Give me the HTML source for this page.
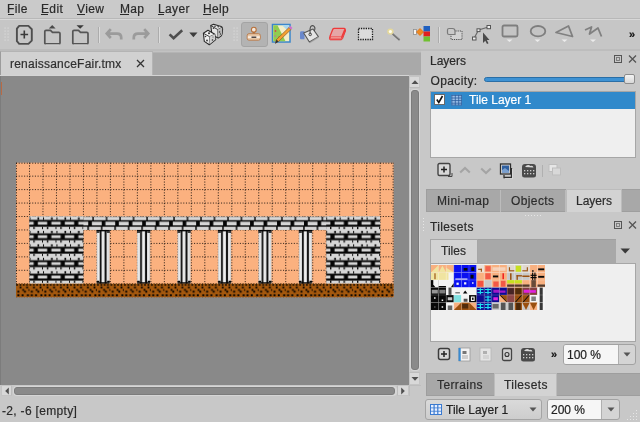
<!DOCTYPE html>
<html><head><meta charset="utf-8">
<style>
*{margin:0;padding:0;box-sizing:border-box}
html,body{width:640px;height:422px;overflow:hidden;background:#c8c8c8;font-family:"Liberation Sans",sans-serif;font-size:12px;color:#2a2a2a;position:relative}
.a{position:absolute}
.t{position:absolute;white-space:nowrap;line-height:14px;-webkit-text-stroke:0.2px currentColor;filter:grayscale(1)}
.u{position:absolute;height:1px;background:#2a2a2a}
svg.a{overflow:visible}
</style></head><body>
<!-- menu bar -->
<div class="a" style="left:0;top:0;width:640px;height:18px;background:#cacaca"></div>
<div class="t" style="left:7px;top:2px;letter-spacing:0.35px">File</div><div class="u" style="left:8px;top:14.2px;width:6px"></div>
<div class="t" style="left:41px;top:2px;letter-spacing:0.35px">Edit</div><div class="u" style="left:41px;top:14.2px;width:7px"></div>
<div class="t" style="left:77px;top:2px;letter-spacing:0.35px">View</div><div class="u" style="left:77px;top:14.2px;width:8px"></div>
<div class="t" style="left:120px;top:2px;letter-spacing:0.35px">Map</div><div class="u" style="left:120px;top:14.2px;width:9px"></div>
<div class="t" style="left:158px;top:2px;letter-spacing:0.35px">Layer</div><div class="u" style="left:158px;top:14.2px;width:6px"></div>
<div class="t" style="left:203px;top:2px;letter-spacing:0.35px">Help</div><div class="u" style="left:203px;top:14.2px;width:8px"></div>
<!-- toolbar -->
<div class="a" style="left:0;top:18px;width:640px;height:1px;background:#b8b8b8"></div>
<div class="a" style="left:0;top:19px;width:640px;height:1px;background:#d8d8d8"></div>
<div class="a" style="left:0;top:20px;width:640px;height:29px;background:#c6c6c6"></div>
<div class="a" style="left:0;top:49px;width:421px;height:2px;background:#bcbcbc"></div>
<!-- grips -->
<svg class="a" style="left:4px;top:27px" width="6" height="16"><g fill="#d9d9d9"><rect x="0.5" y="0.5" width="1.2" height="1.2"/><rect x="0.5" y="3.5" width="1.2" height="1.2"/><rect x="0.5" y="6.5" width="1.2" height="1.2"/><rect x="0.5" y="9.5" width="1.2" height="1.2"/><rect x="0.5" y="12.5" width="1.2" height="1.2"/><rect x="3.5" y="0.5" width="1.2" height="1.2"/><rect x="3.5" y="3.5" width="1.2" height="1.2"/><rect x="3.5" y="6.5" width="1.2" height="1.2"/><rect x="3.5" y="9.5" width="1.2" height="1.2"/><rect x="3.5" y="12.5" width="1.2" height="1.2"/></g></svg>
<svg class="a" style="left:233px;top:27px" width="6" height="16"><g fill="#d9d9d9"><rect x="0.5" y="0.5" width="1.2" height="1.2"/><rect x="0.5" y="3.5" width="1.2" height="1.2"/><rect x="0.5" y="6.5" width="1.2" height="1.2"/><rect x="0.5" y="9.5" width="1.2" height="1.2"/><rect x="0.5" y="12.5" width="1.2" height="1.2"/><rect x="3.5" y="0.5" width="1.2" height="1.2"/><rect x="3.5" y="3.5" width="1.2" height="1.2"/><rect x="3.5" y="6.5" width="1.2" height="1.2"/><rect x="3.5" y="9.5" width="1.2" height="1.2"/><rect x="3.5" y="12.5" width="1.2" height="1.2"/></g></svg>
<!-- new -->
<svg class="a" style="left:15px;top:24px" width="20" height="22"><path d="M4 2.6H13.6L16.6 5.6V17.2L13.6 20.4H4L1.8 17.8V5.2Z" fill="none" stroke="#e4e4e4" stroke-width="0.9"/><path d="M4.2 1.9H13.4L16.8 5.2V16.6L13.4 19.9H4.2L1.9 17.2V4.6Z" fill="none" stroke="#4e4e4e" stroke-width="1.9" stroke-linejoin="round"/><path d="M9.3 6.6V14.4M5.5 10.5H13.1" stroke="#3a3a3a" stroke-width="1.6"/></svg>
<!-- open -->
<svg class="a" style="left:43px;top:24px" width="19" height="22"><path d="M5.8 4.5L9.2 1L12.6 4.5Z" fill="#4a4a4a"/><path d="M1.8 19V7.5Q1.8 6.3 3 6.3H7.5L9.5 8.3H15.8Q17 8.3 17 9.5V19Q17 19.8 16 19.8H2.8Q1.8 19.8 1.8 19Z" fill="none" stroke="#555" stroke-width="1.7" stroke-linejoin="round"/><path d="M2.5 20.8H16.5" stroke="#e0e0e0" stroke-width="0.8"/></svg>
<!-- save -->
<svg class="a" style="left:71px;top:24px" width="19" height="22"><path d="M5.5 1.2H12.8L9.15 4.8Z" fill="#3a3a3a"/><path d="M1.8 19V7.5Q1.8 6.3 3 6.3H7.5L9.5 8.3H15.8Q17 8.3 17 9.5V19Q17 19.8 16 19.8H2.8Q1.8 19.8 1.8 19Z" fill="none" stroke="#555" stroke-width="1.7" stroke-linejoin="round"/><path d="M2.5 20.8H16.5" stroke="#e0e0e0" stroke-width="0.8"/></svg>
<!-- separators -->
<div class="a" style="left:98px;top:27px;width:1px;height:16px;background:#acacac"></div><div class="a" style="left:99px;top:27px;width:1px;height:16px;background:#dcdcdc"></div>
<div class="a" style="left:158px;top:27px;width:1px;height:16px;background:#acacac"></div><div class="a" style="left:159px;top:27px;width:1px;height:16px;background:#dcdcdc"></div>
<div class="a" style="left:438px;top:27px;width:1px;height:16px;background:#acacac"></div><div class="a" style="left:439px;top:27px;width:1px;height:16px;background:#dcdcdc"></div>
<!-- undo / redo -->
<svg class="a" style="left:104px;top:27px" width="20" height="15"><path d="M6.8 2.2L2.8 6.6L6.8 11M3.2 6.6H13Q17.2 6.6 17.2 10.6V12.4" fill="none" stroke="#9b9b9b" stroke-width="2.7"/></svg>
<svg class="a" style="left:131px;top:27px" width="20" height="15"><path d="M13.2 2.2L17.2 6.6L13.2 11M16.8 6.6H7Q2.8 6.6 2.8 10.6V12.4" fill="none" stroke="#9b9b9b" stroke-width="2.7"/></svg>
<!-- check + drop -->
<svg class="a" style="left:168px;top:28px" width="16" height="13"><path d="M1.6 6.4L5.6 10.3L14.2 2.2" fill="none" stroke="#4e4e4e" stroke-width="2.6"/></svg>
<svg class="a" style="left:189px;top:32px" width="9" height="6"><path d="M0.3 0.6H8.5L4.4 5.2Z" fill="#3c3c3c"/></svg>
<!-- dice -->
<svg class="a" style="left:200px;top:21px" width="28" height="26">
<path d="M10.8 4.6L13.6 3.2L21.2 5.6Q22.6 6.4 22.6 8L22.2 12.5Q22 14 21 15L18.2 17L12 14Z" fill="#e4e4e4" stroke="#2a2a2a" stroke-width="1.1" stroke-linejoin="round"/>
<path d="M10.8 4.6L17.8 8.6L22.2 6.2M17.8 8.6L18 16.5" fill="none" stroke="#2a2a2a" stroke-width="0.9"/>
<path d="M17.8 8.6L22.2 6.5L22 13Q21.6 14.8 18 16.5Z" fill="#b8b8b8"/>
<circle cx="15" cy="5.2" r="0.8" fill="#333"/><circle cx="18.2" cy="5.8" r="0.8" fill="#333"/><circle cx="13.5" cy="7.2" r="0.8" fill="#333"/><circle cx="19.5" cy="11" r="0.8" fill="#333"/><circle cx="20.5" cy="13" r="0.7" fill="#333"/>
<path d="M3.4 12.3L8 9.3L14.8 13.3L15.7 18.5L9.3 23.8L4.3 20.4Z" fill="#f0f0f0" stroke="#2a2a2a" stroke-width="1.1" stroke-linejoin="round"/>
<path d="M3.4 12.3L9.6 15.7L14.8 13.3M9.6 15.7L9.3 23.8" fill="none" stroke="#2a2a2a" stroke-width="0.9"/>
<path d="M9.6 15.7L14.8 13.3L15.4 18.4L9.4 23.2Z" fill="#cfcfcf"/>
<circle cx="9" cy="12.3" r="1" fill="#333"/><circle cx="5.5" cy="15.5" r="0.8" fill="#333"/><circle cx="7" cy="19.5" r="0.9" fill="#333"/><circle cx="12.5" cy="19" r="0.8" fill="#333"/><circle cx="13" cy="16" r="0.6" fill="#555"/>
</svg>
<!-- stamp (active) -->
<div class="a" style="left:241px;top:22px;width:27px;height:25px;background:#b3b3b3;border:1px solid #a4a4a4;border-radius:3px"></div>
<svg class="a" style="left:246px;top:25px" width="17" height="18">
<rect x="6.7" y="6.5" width="2.2" height="2.8" fill="#b07040"/>
<circle cx="7.8" cy="4.7" r="2.4" fill="#f4e8dc" stroke="#b8703a" stroke-width="1.1"/>
<path d="M1.2 10.5Q1.2 8.7 3 8.7H12.5Q14.3 8.7 14.3 10.5V13.5Q14.3 15.2 12.5 15.2H3Q1.2 15.2 1.2 13.5Z" fill="#e8c8a8" stroke="#b87848" stroke-width="0.9"/>
<rect x="1.8" y="11.2" width="12" height="1.8" fill="#f8ece0"/>
<rect x="5.5" y="11.6" width="4.8" height="1.2" fill="#2a2020"/>
</svg>
<!-- terrain -->
<svg class="a" style="left:271px;top:23px" width="22" height="23">
<rect x="1.5" y="1.5" width="17.5" height="17.5" fill="#f4eec8" stroke="#3a86cc" stroke-width="1.5"/>
<path d="M2.3 2.3H6.5L14.5 18.2H2.3Z" fill="#90cc50"/>
<path d="M11 2.3H18.2V9Z" fill="#a8d8f0"/>
<circle cx="4.5" cy="8" r="0.9" fill="#d84848"/><circle cx="4.2" cy="13" r="0.8" fill="#c060c0"/><circle cx="8" cy="14" r="0.7" fill="#d84848"/>
<path d="M4.5 19.5L5.5 16.5L18 4.5L20 6.5L7.5 18.5Z" fill="#f4a030" stroke="#8a5a2a" stroke-width="0.7"/>
<path d="M18 4.5L19.5 3L21.5 5L20 6.5Z" fill="#d070d0"/>
<path d="M4 21L5.5 16.5L7.5 18.5Z" fill="#333"/>
</svg>
<!-- bucket -->
<svg class="a" style="left:299px;top:24px" width="22" height="20">
<path d="M1 8.5Q1 7.3 2.5 7.3H5.5V15.2H2Q1 15.2 1 14.2Z" fill="#6a88cc"/>
<path d="M4.7 9L14 5L19.4 12.6L10.4 18Z" fill="#e4e4e4" stroke="#555" stroke-width="1.1" stroke-linejoin="round"/>
<path d="M10.4 18L19.4 12.6L19.8 13.8L11 19.2Z" fill="#9a9a9a" opacity="0.7"/>
<path d="M11.2 10.2Q10.5 3 12.3 2Q14.5 0.8 15.8 3.5Q16.3 5 15.2 7" fill="none" stroke="#4a4a4a" stroke-width="1.1"/>
<circle cx="11.2" cy="10.4" r="1.3" fill="none" stroke="#4a4a4a" stroke-width="1"/>
</svg>
<!-- eraser -->
<svg class="a" style="left:328px;top:27px" width="19" height="15">
<path d="M1.5 10.2V11.8Q1.5 12.8 2.5 12.8H13Q14 12.8 14.5 11.8L17.5 4V2.5L13.5 10.2Z" fill="#e85a5a" stroke="#ee3a3a" stroke-width="1" stroke-linejoin="round"/>
<path d="M4.8 2.2Q5.3 1.4 6.2 1.4H16.2Q17.3 1.4 16.8 2.5L14 9.3Q13.6 10.2 12.6 10.2H2.6Q1.5 10.2 2 9.2Z" fill="#e6a6a6" stroke="#ee3a3a" stroke-width="1.3" stroke-linejoin="round"/>
<path d="M2.8 10.8H13" stroke="#f4d0c8" stroke-width="0.8"/>
</svg>
<!-- rect select -->
<svg class="a" style="left:357px;top:27px" width="18" height="14"><rect x="1.5" y="1.5" width="14" height="11" fill="#dcdcdc" stroke="#1a1a1a" stroke-width="1.3" stroke-dasharray="1.3 1.1"/></svg>
<!-- magic wand -->
<svg class="a" style="left:386px;top:27px" width="16" height="15">
<circle cx="4.4" cy="4.6" r="3.2" fill="#ffe878" opacity="0.55"/><circle cx="4.4" cy="4.6" r="1.6" fill="#fffff0"/>
<path d="M6.6 6.8L13.6 13" stroke="#6e6e6e" stroke-width="1.7"/><path d="M7 6.5L13.8 12.5" stroke="#a8a8a8" stroke-width="0.5"/>
</svg>
<!-- select same tile -->
<svg class="a" style="left:412px;top:25px" width="20" height="18">
<rect x="1.5" y="4.5" width="3" height="5" fill="#f4f4f4" stroke="#909090" stroke-width="0.8"/>
<path d="M4.5 7L8 3.5L11.5 7L8 10.5Z" fill="#f08a20" stroke="#e07010" stroke-width="0.8"/>
<rect x="11.5" y="1" width="6.5" height="5.5" fill="#2060c0"/><rect x="11.5" y="6.5" width="6.5" height="5" fill="#e02020"/><rect x="11.5" y="11.5" width="6.5" height="5" fill="#70c030"/>
</svg>
<!-- select objects -->
<svg class="a" style="left:446px;top:27px" width="18" height="14"><rect x="5" y="4" width="11" height="8.5" fill="#d2d2d2" stroke="#505050" stroke-width="1" stroke-dasharray="1.2 1"/><path d="M3 1.5H6.5Q9 1.5 9 4V7.5H3Q1.5 7.5 1.5 6V3Q1.5 1.5 3 1.5Z" fill="#cacaca" stroke="#7a7a7a" stroke-width="1.2"/></svg>
<!-- edit polygons -->
<svg class="a" style="left:471px;top:24px" width="21" height="21">
<path d="M3 14.5L7.5 6L17.5 3" fill="none" stroke="#6a6a6a" stroke-width="1.2"/>
<rect x="1.5" y="13" width="3.5" height="3" fill="#eee" stroke="#555" stroke-width="1"/>
<rect x="6" y="4.8" width="3" height="2.8" fill="#eee" stroke="#555" stroke-width="1"/>
<rect x="16" y="1.5" width="3.5" height="3.2" fill="#eee" stroke="#555" stroke-width="1"/>
<path d="M12 8.5V19L14.3 16.8L16 20L17.5 19.2L15.8 16H18.5Z" fill="#4a4a4a"/>
</svg>
<!-- rect / ellipse / polygon / polyline -->
<svg class="a" style="left:501px;top:24px" width="18" height="20"><rect x="1.5" y="1.5" width="15" height="11" fill="#c4c4c4" stroke="#7e7e7e" stroke-width="1.8" rx="1.5"/><path d="M5.5 15.5H11.5L8.5 18Z" fill="#ececec"/></svg>
<svg class="a" style="left:529px;top:24px" width="18" height="20"><ellipse cx="9" cy="7.2" rx="7.3" ry="5.2" fill="#c4c4c4" stroke="#7e7e7e" stroke-width="1.8"/><path d="M5.5 15.5H11.5L8.5 18Z" fill="#ececec"/></svg>
<svg class="a" style="left:554px;top:24px" width="21" height="20"><path d="M2 8.5L14.5 2L18.5 12.5Z" fill="none" stroke="#808080" stroke-width="1.8" stroke-linejoin="round"/><path d="M7.5 15.5H13.5L10.5 18Z" fill="#ececec"/></svg>
<svg class="a" style="left:583px;top:24px" width="21" height="20"><path d="M2 6L8.5 3L6.5 10L15 4L18.5 12.5" fill="none" stroke="#808080" stroke-width="1.8" stroke-linejoin="round"/><path d="M7 15.5H13L10 18Z" fill="#ececec"/></svg>
<!-- chevron » -->
<div class="t" style="left:629px;top:27px;font-size:11px;font-weight:bold;color:#111;letter-spacing:-1px">»</div>
<!-- tab bar -->
<div class="a" style="left:0;top:51px;width:421px;height:25px;background:#c2c2c2"></div>
<div class="a" style="left:152px;top:52px;width:269px;height:23px;background:#a9a9a9;border-top:1px solid #b4b4b4"></div>
<div class="a" style="left:0;top:51px;width:153px;height:24px;background:#d1d1d1;border:1px solid #b4b4b4;border-left-color:#9c9c9c;border-bottom:none"></div>
<div class="t" style="left:10px;top:57px;color:#303030;letter-spacing:0.22px">renaissanceFair.tmx</div>
<svg class="a" style="left:136px;top:59px" width="9" height="9"><path d="M1 1L8 8M8 1L1 8" stroke="#333" stroke-width="1.3"/></svg>
<!-- map view -->
<div class="a" style="left:0;top:75px;width:409px;height:1px;background:#d4d4d4"></div>
<div class="a" style="left:0;top:76px;width:409px;height:309px;background:#898989"></div>
<div class="a" style="left:0;top:76px;width:1px;height:309px;background:#7c7c7c"></div>
<div class="a" style="left:1px;top:82px;width:1.3px;height:13px;background:#b86a45"></div>
<svg class="a" style="left:16px;top:162px" width="379" height="137" viewBox="0 0 379 137">
<defs>
<pattern id="brk" x="0" y="0" width="13.5" height="13.5" patternUnits="userSpaceOnUse">
<rect width="13.5" height="13.5" fill="#050505"/>
<rect x="0" y="0" width="13.5" height="3.4" fill="#d6d6d6"/>
<rect x="0" y="10.3" width="13.5" height="3.2" fill="#d6d6d6"/>
<rect x="3.9" y="10.3" width="1.3" height="2.4" fill="#050505"/>
<rect x="12.6" y="10.3" width="1.3" height="2.4" fill="#050505"/>
<rect x="8.1" y="0.9" width="1.6" height="2.5" fill="#050505"/>
<rect x="-0.4" y="0.9" width="1.4" height="2.5" fill="#050505"/>
<rect x="0" y="5.3" width="4.2" height="2.9" fill="#d6d6d6"/>
<rect x="8.4" y="5.3" width="5.1" height="2.9" fill="#d6d6d6"/>
</pattern>
<pattern id="lint" x="0" y="0" width="13.5" height="13.5" patternUnits="userSpaceOnUse">
<rect width="13.5" height="13.5" fill="#050505"/>
<rect x="0" y="0.2" width="9" height="3.5" fill="#d6d6d6"/>
<rect x="10.4" y="0.2" width="3.1" height="3.5" fill="#d6d6d6"/>
<rect x="0" y="5.2" width="4.8" height="3.7" fill="#d6d6d6"/>
<rect x="8.5" y="5.2" width="5" height="3.7" fill="#d6d6d6"/>
<rect x="0" y="10.3" width="4" height="3.2" fill="#d6d6d6"/>
<rect x="5.5" y="10.3" width="8" height="3.2" fill="#d6d6d6"/>
</pattern>
<pattern id="dirt" x="0" y="0" width="13.5" height="13.5" patternUnits="userSpaceOnUse">
<rect width="13.5" height="13.5" fill="#a4580e"/>
<g fill="#000">
<rect x="0.2" y="0.3" width="1.6" height="1.6"/><rect x="3.6" y="0.3" width="1.6" height="1.6"/><rect x="6.9" y="0.3" width="1.6" height="1.6"/><rect x="10.2" y="0.3" width="1.6" height="1.6"/>
<rect x="3.6" y="2.8" width="1.8" height="1.8"/><rect x="10.2" y="2.8" width="1.8" height="1.8"/>
<rect x="6.3" y="5.3" width="1.8" height="1.8"/><rect x="12.4" y="5.5" width="1.5" height="1.6"/>
<rect x="1.4" y="7" width="1.9" height="1.9"/><rect x="8" y="7" width="1.9" height="1.9"/>
<rect x="1.4" y="10.6" width="1.9" height="1.9"/><rect x="5.6" y="10.6" width="1.9" height="1.9"/><rect x="11" y="10.6" width="1.9" height="1.9"/>
</g>
</pattern>
<pattern id="pil" x="0" y="0" width="13.5" height="13.5" patternUnits="userSpaceOnUse">
<rect x="-0.5" width="13.6" height="13.5" fill="#d2d4d6"/>
<rect x="0.8" width="1.2" height="13.5" fill="#eeeeee"/>
<rect x="2.9" width="1.6" height="13.5" fill="#050505"/>
<rect x="5.2" width="1.6" height="13.5" fill="#f0f0f0"/>
<rect x="7.8" width="1.8" height="13.5" fill="#050505"/>
<rect x="10.3" width="1.2" height="13.5" fill="#ececec"/>
</pattern>
</defs>
<g transform="translate(0,0.7) scale(0.99896,0.9963)">
<rect width="378" height="135" fill="#fbb17f"/>
<path d="M0.5 0V135 M13.5 0V135 M27.0 0V135 M40.5 0V135 M54.0 0V135 M67.5 0V135 M81.0 0V135 M94.5 0V135 M108.0 0V135 M121.5 0V135 M135.0 0V135 M148.5 0V135 M162.0 0V135 M175.5 0V135 M189.0 0V135 M202.5 0V135 M216.0 0V135 M229.5 0V135 M243.0 0V135 M256.5 0V135 M270.0 0V135 M283.5 0V135 M297.0 0V135 M310.5 0V135 M324.0 0V135 M337.5 0V135 M351.0 0V135 M364.5 0V135 M377.5 0V135 M0 0.5H378 M0 13.5H378 M0 27.0H378 M0 40.5H378 M0 54.0H378 M0 67.5H378 M0 81.0H378 M0 94.5H378 M0 108.0H378 M0 121.5H378 M0 134.5H378" stroke="#000" stroke-width="1" stroke-dasharray="1.1 1.6" opacity="0.78" fill="none"/>
<rect x="13.5" y="54.0" width="351.0" height="13.5" fill="url(#lint)"/>
<rect x="13.5" y="54.0" width="54.0" height="67.5" fill="url(#brk)"/>
<rect x="310.5" y="54.0" width="54.0" height="67.5" fill="url(#brk)"/>
<rect x="80.6" y="67.5" width="13.3" height="54.0" fill="url(#pil)"/>
<rect x="80.6" y="67.5" width="13.3" height="1.4" fill="#050505"/>
<rect x="80.6" y="68.9" width="3" height="1.4" fill="#050505"/>
<rect x="90.9" y="68.9" width="3" height="1.4" fill="#050505"/>
<rect x="80.8" y="118.5" width="2.6" height="1.6" fill="#050505"/>
<rect x="91.3" y="118.5" width="2.6" height="1.6" fill="#050505"/>
<rect x="80.8" y="120.0" width="12.8" height="1.5" fill="#050505"/>
<rect x="121.1" y="67.5" width="13.3" height="54.0" fill="url(#pil)"/>
<rect x="121.1" y="67.5" width="13.3" height="1.4" fill="#050505"/>
<rect x="121.1" y="68.9" width="3" height="1.4" fill="#050505"/>
<rect x="131.4" y="68.9" width="3" height="1.4" fill="#050505"/>
<rect x="121.3" y="118.5" width="2.6" height="1.6" fill="#050505"/>
<rect x="131.8" y="118.5" width="2.6" height="1.6" fill="#050505"/>
<rect x="121.3" y="120.0" width="12.8" height="1.5" fill="#050505"/>
<rect x="161.6" y="67.5" width="13.3" height="54.0" fill="url(#pil)"/>
<rect x="161.6" y="67.5" width="13.3" height="1.4" fill="#050505"/>
<rect x="161.6" y="68.9" width="3" height="1.4" fill="#050505"/>
<rect x="171.9" y="68.9" width="3" height="1.4" fill="#050505"/>
<rect x="161.8" y="118.5" width="2.6" height="1.6" fill="#050505"/>
<rect x="172.3" y="118.5" width="2.6" height="1.6" fill="#050505"/>
<rect x="161.8" y="120.0" width="12.8" height="1.5" fill="#050505"/>
<rect x="202.1" y="67.5" width="13.3" height="54.0" fill="url(#pil)"/>
<rect x="202.1" y="67.5" width="13.3" height="1.4" fill="#050505"/>
<rect x="202.1" y="68.9" width="3" height="1.4" fill="#050505"/>
<rect x="212.4" y="68.9" width="3" height="1.4" fill="#050505"/>
<rect x="202.3" y="118.5" width="2.6" height="1.6" fill="#050505"/>
<rect x="212.8" y="118.5" width="2.6" height="1.6" fill="#050505"/>
<rect x="202.3" y="120.0" width="12.8" height="1.5" fill="#050505"/>
<rect x="242.6" y="67.5" width="13.3" height="54.0" fill="url(#pil)"/>
<rect x="242.6" y="67.5" width="13.3" height="1.4" fill="#050505"/>
<rect x="242.6" y="68.9" width="3" height="1.4" fill="#050505"/>
<rect x="252.9" y="68.9" width="3" height="1.4" fill="#050505"/>
<rect x="242.8" y="118.5" width="2.6" height="1.6" fill="#050505"/>
<rect x="253.3" y="118.5" width="2.6" height="1.6" fill="#050505"/>
<rect x="242.8" y="120.0" width="12.8" height="1.5" fill="#050505"/>
<rect x="283.1" y="67.5" width="13.3" height="54.0" fill="url(#pil)"/>
<rect x="283.1" y="67.5" width="13.3" height="1.4" fill="#050505"/>
<rect x="283.1" y="68.9" width="3" height="1.4" fill="#050505"/>
<rect x="293.4" y="68.9" width="3" height="1.4" fill="#050505"/>
<rect x="283.3" y="118.5" width="2.6" height="1.6" fill="#050505"/>
<rect x="293.8" y="118.5" width="2.6" height="1.6" fill="#050505"/>
<rect x="283.3" y="120.0" width="12.8" height="1.5" fill="#050505"/>
<rect x="0" y="121.5" width="378" height="13.5" fill="url(#dirt)"/>
</g></svg>
<!-- v scrollbar -->
<div class="a" style="left:409px;top:76px;width:12px;height:309px;background:#c8c8c8"></div>
<div class="a" style="left:409px;top:76px;width:11px;height:12px;background:#d8d8d8;border:1px solid #c4c4c4;border-bottom-color:#bdbdbd"></div>
<svg class="a" style="left:411px;top:79px" width="8" height="6"><path d="M0.5 5H7.5L4 1.2Z" fill="#505050"/></svg>
<div class="a" style="left:410px;top:89px;width:10px;height:282px;border-radius:4px;background:#d6d6d6"></div>
<div class="a" style="left:411px;top:90px;width:8px;height:280px;border-radius:3px;background:#8a8a8a;border:1px solid #7c7c7c"></div>
<div class="a" style="left:409px;top:372px;width:11px;height:13px;background:#d8d8d8;border:1px solid #c4c4c4;border-top-color:#bdbdbd"></div>
<svg class="a" style="left:411px;top:376px" width="8" height="6"><path d="M0.5 1H7.5L4 4.8Z" fill="#505050"/></svg>
<!-- h scrollbar -->
<div class="a" style="left:0;top:385px;width:409px;height:11px;background:#c8c8c8"></div>
<div class="a" style="left:1px;top:385px;width:11px;height:11px;background:#d8d8d8;border:1px solid #c4c4c4;border-right-color:#bdbdbd"></div>
<svg class="a" style="left:4px;top:387px" width="6" height="8"><path d="M4.8 0.5V7.5L1.2 4Z" fill="#505050"/></svg>
<div class="a" style="left:13px;top:386px;width:384px;height:10px;border-radius:4px;background:#d6d6d6"></div>
<div class="a" style="left:14px;top:387px;width:381px;height:8px;border-radius:3px;background:#8a8a8a;border:1px solid #7c7c7c"></div>
<div class="a" style="left:397px;top:385px;width:12px;height:11px;background:#d8d8d8;border:1px solid #c4c4c4;border-left-color:#bdbdbd"></div>
<svg class="a" style="left:400px;top:387px" width="6" height="8"><path d="M1.2 0.5V7.5L4.8 4Z" fill="#505050"/></svg>
<div class="a" style="left:409px;top:385px;width:12px;height:11px;background:#c8c8c8;border-top:1px solid #bdbdbd;border-left:1px solid #bdbdbd"></div>
<!-- status -->
<div class="a" style="left:0;top:396px;width:421px;height:26px;background:#c8c8c8"></div>
<div class="t" style="left:2px;top:403.5px;letter-spacing:0.32px;color:#2a2a2a">-2, -6 [empty]</div>
<!-- right dock -->
<div class="a" style="left:421px;top:49px;width:219px;height:373px;background:#c8c8c8"></div>
<div class="a" style="left:421px;top:49px;width:219px;height:2px;background:#bdbdbd"></div>
<div class="t" style="left:430px;top:54px">Layers</div>
<svg class="a" style="left:613px;top:54px" width="25" height="10"><rect x="1.5" y="1.5" width="7" height="7" fill="none" stroke="#555" stroke-width="1"/><rect x="3.5" y="3.5" width="3" height="3" fill="none" stroke="#777" stroke-width="0.9"/><path d="M16 1.5L23 8.5M23 1.5L16 8.5" stroke="#555" stroke-width="1.3"/></svg>
<div class="t" style="left:430.5px;top:74px;letter-spacing:0.38px">Opacity:</div>
<div class="a" style="left:484px;top:77px;width:147px;height:5px;background:#3d92d4;border:1px solid #2a6ea6;border-radius:2.5px"></div>
<div class="a" style="left:624px;top:74px;width:11px;height:10px;background:linear-gradient(#f4f4f4,#d8d8d8);border:1px solid #8c8c8c;border-radius:2px"></div>
<!-- layer list -->
<div class="a" style="left:430px;top:91px;width:206px;height:67px;background:#efefef;border:1px solid #a6a6a6"></div>
<div class="a" style="left:431px;top:92px;width:204px;height:17px;background:#3089cb"></div>
<svg class="a" style="left:433px;top:93px" width="32" height="14">
<rect x="1.5" y="1.5" width="10" height="10" fill="#fff" stroke="#6a6a6a" stroke-width="1"/>
<path d="M3.8 6.5L5.8 9.5L9.5 3" fill="none" stroke="#111" stroke-width="1.6"/>
<rect x="18.4" y="1.9" width="10.4" height="10.4" fill="#9cc0e8"/><path d="M18.9 1.9V12.3M22.3 1.9V12.3M25.7 1.9V12.3M28.4 1.9V12.3M18.4 2.4H28.8M18.4 5H28.8M18.4 7.6H28.8M18.4 10.2H28.8M18.4 12H28.8" stroke="#2a5a9a" stroke-width="0.8"/></svg>
<div class="t" style="left:469px;top:93px;color:#fff">Tile Layer 1</div>
<!-- layer tools -->
<svg class="a" style="left:436px;top:162px" width="130" height="18">
<rect x="2" y="1.5" width="12" height="12" rx="1.5" fill="#d8d8d8" stroke="#444" stroke-width="1.4"/><path d="M8 4.5V10.5M5 7.5H11" stroke="#222" stroke-width="1.5"/><path d="M12 14.5H16V11" fill="none" stroke="#444" stroke-width="1"/>
<path d="M24.2 10.5L29 6L33.8 10.5" fill="none" stroke="#a4a4a4" stroke-width="2.1"/>
<path d="M45.2 6.5L50 11L54.8 6.5" fill="none" stroke="#a4a4a4" stroke-width="2.1"/>
<rect x="64.5" y="2" width="10" height="10" fill="#e0e0e0" stroke="#2e2e2e" stroke-width="1.3"/><rect x="66" y="3.5" width="7" height="7" fill="#2f5f9f"/><path d="M66 8L69 6L73 9V10.5H66Z" fill="#7aa0d0"/><path d="M75.5 6V15.5H68V13" fill="none" stroke="#2e2e2e" stroke-width="1.3"/><path d="M76.5 7V16.5H69" fill="none" stroke="#f0f0f0" stroke-width="0.6"/>
<path d="M86 5Q86 2 89 2H97Q100 2 100 5V13Q100 15.5 97.5 15.5H88.5Q86 15.5 86 13Z" fill="#4a4a4a"/><path d="M89 5Q91.5 1.5 94.5 4Q97 3 97.5 5.5Z" fill="#d8d8d8"/><g fill="#cfcfcf"><rect x="88" y="8" width="1.3" height="1.3"/><rect x="91" y="8" width="1.3" height="1.3"/><rect x="94" y="8" width="1.3" height="1.3"/><rect x="97" y="8" width="1.3" height="1.3"/><rect x="88" y="11" width="1.3" height="1.3"/><rect x="91" y="11" width="1.3" height="1.3"/><rect x="94" y="11" width="1.3" height="1.3"/><rect x="97" y="11" width="1.3" height="1.3"/></g>
<rect x="106" y="3" width="1" height="12" fill="#b0b0b0"/>
<rect x="113" y="2.5" width="8" height="7" fill="#e6e6e6" stroke="#bdbdbd" stroke-width="1"/><rect x="116.5" y="6" width="8" height="7" fill="#d8d8d8" stroke="#bdbdbd" stroke-width="1"/>
</svg>
<!-- layers tabs -->
<div class="a" style="left:426px;top:189px;width:214px;height:23px;background:#a8a8a8;border:1px solid #9e9e9e;border-right:none"></div>
<div class="a" style="left:500px;top:190px;width:1px;height:22px;background:#bcbcbc"></div>
<div class="a" style="left:565px;top:190px;width:1px;height:22px;background:#bcbcbc"></div>
<div class="a" style="left:566px;top:189px;width:56px;height:23px;background:#d3d3d3;border:1px solid #bcbcbc;border-bottom:none"></div>
<div class="t" style="left:437px;top:194px;color:#2c2c2c;letter-spacing:0.36px">Mini-map</div>
<div class="t" style="left:511px;top:194px;color:#2c2c2c;letter-spacing:0.4px">Objects</div>
<div class="t" style="left:576px;top:194px;color:#2c2c2c">Layers</div>
<svg class="a" style="left:524px;top:214px" width="20" height="3"><g fill="#e6e6e6"><rect x="1" y="1" width="1" height="1"/><rect x="4" y="1" width="1" height="1"/><rect x="7" y="1" width="1" height="1"/><rect x="10" y="1" width="1" height="1"/><rect x="13" y="1" width="1" height="1"/><rect x="16" y="1" width="1" height="1"/></g></svg>
<svg class="a" style="left:422px;top:217px" width="3" height="16"><g fill="#e6e6e6"><rect x="1" y="1" width="1" height="1"/><rect x="1" y="4" width="1" height="1"/><rect x="1" y="7" width="1" height="1"/><rect x="1" y="10" width="1" height="1"/><rect x="1" y="13" width="1" height="1"/></g></svg>
<!-- tilesets -->
<div class="t" style="left:430px;top:220px;letter-spacing:0.36px">Tilesets</div>
<svg class="a" style="left:613px;top:220px" width="25" height="11"><rect x="1.5" y="1.5" width="7" height="7" fill="none" stroke="#555" stroke-width="1"/><rect x="3.5" y="3.5" width="3" height="3" fill="none" stroke="#777" stroke-width="0.9"/><path d="M16 1.5L23 8.5M23 1.5L16 8.5" stroke="#555" stroke-width="1.3"/></svg>
<div class="a" style="left:430px;top:239px;width:186px;height:24px;background:#a8a8a8;border-top:1px solid #a0a0a0"></div>
<div class="a" style="left:430px;top:239px;width:48px;height:24px;background:#d3d3d3;border:1px solid #a6a6a6;border-bottom:none"></div>
<div class="t" style="left:441px;top:244px;color:#2c2c2c">Tiles</div>
<svg class="a" style="left:620px;top:248px" width="11" height="7"><path d="M0.5 0.5H10L5.25 5.5Z" fill="#3a3a3a"/></svg>
<div class="a" style="left:430px;top:263px;width:206px;height:79px;background:#efefef;border:1px solid #a6a6a6"></div>
<svg class="a" style="left:431px;top:264.5px" width="114" height="45" viewBox="0 0 113.25 44.7">
<rect x="0.00" y="0.00" width="7.55" height="7.45" fill="#f8b080"/>
<polygon points="0.00,7.45 7.55,0.00 7.55,7.45" fill="#f0e4a0"/>
<rect x="7.55" y="0.00" width="7.55" height="7.45" fill="#f8b080"/>
<polygon points="7.55,7.45 11.32,0.75 15.10,7.45" fill="#f0e4a0"/>
<rect x="15.10" y="0.00" width="7.55" height="7.45" fill="#f8b080"/>
<polygon points="15.10,2.61 22.65,7.45 15.10,7.45" fill="#f0e4a0"/>
<rect x="22.65" y="0.00" width="7.55" height="7.45" fill="#0a10f0"/>
<rect x="30.20" y="0.00" width="7.55" height="7.45" fill="#0a10f0"/>
<rect x="32.46" y="2.98" width="3.77" height="2.61" fill="#080808" opacity="1"/>
<rect x="37.75" y="0.00" width="7.55" height="7.45" fill="#0a10f0"/>
<rect x="40.02" y="2.23" width="3.02" height="3.73" fill="#080808" opacity="1"/>
<rect x="45.30" y="0.00" width="7.55" height="7.45" fill="#e8e0d8"/>
<rect x="46.81" y="3.73" width="3.77" height="1.12" fill="#9a5010" opacity="1"/>
<rect x="49.45" y="3.73" width="1.13" height="2.98" fill="#9a5010" opacity="1"/>
<rect x="52.85" y="0.00" width="7.55" height="7.45" fill="#f8b080"/>
<rect x="53.98" y="1.12" width="5.28" height="5.21" fill="#f02020" opacity="0.55"/>
<rect x="60.40" y="0.00" width="7.55" height="7.45" fill="#f8b080"/>
<rect x="61.16" y="2.61" width="6.79" height="0.89" fill="#f4f4f4" opacity="1"/>
<rect x="61.16" y="4.47" width="6.79" height="0.89" fill="#f4f4f4" opacity="1"/>
<rect x="67.95" y="0.00" width="7.55" height="7.45" fill="#f8b080"/>
<rect x="67.95" y="2.61" width="6.04" height="0.89" fill="#f4f4f4" opacity="1"/>
<rect x="67.95" y="4.47" width="6.04" height="0.89" fill="#f4f4f4" opacity="1"/>
<rect x="75.50" y="0.00" width="7.55" height="7.45" fill="#e0d8d0"/>
<rect x="77.39" y="2.23" width="1.13" height="3.35" fill="#9a5010" opacity="1"/>
<rect x="77.39" y="5.21" width="5.66" height="1.12" fill="#9a5010" opacity="1"/>
<rect x="83.05" y="0.00" width="7.55" height="7.45" fill="#d8d8c8"/>
<rect x="84.18" y="0.75" width="5.28" height="5.96" fill="#c8e020" opacity="1"/>
<rect x="90.60" y="0.00" width="7.55" height="7.45" fill="#e0d8d0"/>
<rect x="95.13" y="2.23" width="1.13" height="3.35" fill="#9a5010" opacity="1"/>
<rect x="90.60" y="5.21" width="5.66" height="1.12" fill="#9a5010" opacity="1"/>
<rect x="98.15" y="0.00" width="7.55" height="7.45" fill="#f8b080"/>
<rect x="100.41" y="5.21" width="1.51" height="1.49" fill="#080808" opacity="1"/>
<rect x="105.70" y="0.00" width="7.55" height="7.45" fill="#f8b080"/>
<rect x="106.45" y="3.35" width="6.04" height="1.86" fill="#080808" opacity="1"/>
<rect x="0.00" y="7.45" width="7.55" height="7.45" fill="#f0e4a0"/>
<rect x="3.40" y="8.20" width="1.13" height="5.96" fill="#9a5010" opacity="1"/>
<rect x="7.55" y="7.45" width="7.55" height="7.45" fill="#f0e4a0"/>
<rect x="15.10" y="7.45" width="7.55" height="7.45" fill="#f4f4f4"/>
<rect x="15.10" y="7.45" width="2.26" height="7.45" fill="#f0e4a0" opacity="1"/>
<rect x="22.65" y="7.45" width="7.55" height="7.45" fill="#0a10f0"/>
<rect x="24.16" y="13.41" width="6.04" height="1.12" fill="#f4f4f4" opacity="1"/>
<rect x="30.20" y="7.45" width="7.55" height="7.45" fill="#0a10f0"/>
<rect x="30.20" y="13.41" width="6.04" height="1.12" fill="#f4f4f4" opacity="1"/>
<rect x="37.75" y="7.45" width="7.55" height="7.45" fill="#0a10f0"/>
<rect x="39.26" y="9.69" width="3.02" height="3.73" fill="#080808" opacity="1"/>
<rect x="45.30" y="7.45" width="7.55" height="7.45" fill="#f8b080"/>
<rect x="52.85" y="7.45" width="7.55" height="7.45" fill="#f8b080"/>
<rect x="53.98" y="8.20" width="5.28" height="5.96" fill="#f02020" opacity="0.6"/>
<rect x="60.40" y="7.45" width="7.55" height="7.45" fill="#f8b080"/>
<rect x="61.53" y="10.43" width="5.28" height="1.86" fill="#080808" opacity="1"/>
<rect x="67.95" y="7.45" width="7.55" height="7.45" fill="#f8b080"/>
<rect x="70.97" y="8.20" width="1.51" height="5.96" fill="#f02020" opacity="1"/>
<rect x="75.50" y="7.45" width="7.55" height="7.45" fill="#c8c8c8"/>
<rect x="78.52" y="8.20" width="1.51" height="6.71" fill="#9a5010" opacity="1"/>
<rect x="83.05" y="7.45" width="7.55" height="7.45" fill="#c8c8c8"/>
<rect x="84.94" y="10.06" width="5.66" height="1.34" fill="#9a5010" opacity="1"/>
<rect x="84.94" y="10.06" width="1.36" height="4.84" fill="#9a5010" opacity="1"/>
<rect x="90.60" y="7.45" width="7.55" height="7.45" fill="#c8c8c8"/>
<rect x="90.60" y="10.43" width="7.55" height="1.49" fill="#9a5010" opacity="1"/>
<rect x="98.15" y="7.45" width="7.55" height="7.45" fill="#f8b080"/>
<rect x="98.90" y="9.69" width="6.04" height="1.12" fill="#080808" opacity="1"/>
<rect x="98.90" y="11.92" width="6.04" height="1.12" fill="#080808" opacity="1"/>
<rect x="100.41" y="7.45" width="1.13" height="7.45" fill="#080808" opacity="1"/>
<rect x="102.68" y="7.45" width="1.13" height="7.45" fill="#080808" opacity="1"/>
<rect x="105.70" y="7.45" width="7.55" height="7.45" fill="#f8b080"/>
<rect x="106.45" y="10.80" width="6.04" height="1.86" fill="#080808" opacity="1"/>
<rect x="0.00" y="14.90" width="7.55" height="7.45" fill="#080808"/>
<polygon points="2.26,14.90 7.55,14.90 7.55,22.35 4.53,22.35 2.26,19.37" fill="#f4f4f4"/>
<rect x="7.55" y="14.90" width="7.55" height="7.45" fill="#f4f4f4"/>
<rect x="7.55" y="20.86" width="7.55" height="1.49" fill="#080808" opacity="1"/>
<rect x="15.10" y="14.90" width="7.55" height="7.45" fill="#f4f4f4"/>
<polygon points="19.63,22.35 22.65,17.88 22.65,22.35" fill="#080808"/>
<rect x="22.65" y="14.90" width="7.55" height="7.45" fill="#0a10f0"/>
<rect x="25.29" y="17.51" width="2.26" height="2.23" fill="#f4f4f4" opacity="1"/>
<rect x="30.20" y="14.90" width="7.55" height="7.45" fill="#0a10f0"/>
<rect x="32.84" y="17.14" width="2.26" height="2.23" fill="#f4f4f4" opacity="1"/>
<rect x="37.75" y="14.90" width="7.55" height="7.45" fill="#0a10f0"/>
<rect x="40.77" y="17.14" width="1.51" height="1.49" fill="#f4f4f4" opacity="1"/>
<rect x="45.30" y="14.90" width="7.55" height="7.45" fill="#f8b080"/>
<rect x="46.05" y="15.64" width="6.04" height="5.96" fill="#f02020" opacity="0.65"/>
<rect x="52.85" y="14.90" width="7.55" height="7.45" fill="#c8c8c8"/>
<rect x="60.40" y="14.90" width="7.55" height="7.45" fill="#f8b080"/>
<rect x="61.91" y="16.39" width="5.28" height="5.21" fill="#f02020" opacity="0.6"/>
<rect x="67.95" y="14.90" width="7.55" height="7.45" fill="#f8b080"/>
<rect x="69.46" y="15.64" width="4.53" height="5.96" fill="#f02020" opacity="0.6"/>
<rect x="75.50" y="14.90" width="7.55" height="7.45" fill="#f8b080"/>
<rect x="75.50" y="14.90" width="7.55" height="3.35" fill="#c8e020" opacity="1"/>
<rect x="75.50" y="19.37" width="7.55" height="2.23" fill="#080808" opacity="0.7"/>
<rect x="83.05" y="14.90" width="7.55" height="7.45" fill="#f8b080"/>
<rect x="83.05" y="14.90" width="7.55" height="3.35" fill="#c8e020" opacity="1"/>
<rect x="83.05" y="19.37" width="7.55" height="2.23" fill="#080808" opacity="0.7"/>
<rect x="90.60" y="14.90" width="7.55" height="7.45" fill="#f8b080"/>
<rect x="90.60" y="19.37" width="7.55" height="2.23" fill="#080808" opacity="0.7"/>
<rect x="98.15" y="14.90" width="7.55" height="7.45" fill="#f8b080"/>
<rect x="99.66" y="14.90" width="4.53" height="7.45" fill="#080808" opacity="0.6"/>
<rect x="105.70" y="14.90" width="7.55" height="7.45" fill="#f8b080"/>
<rect x="105.70" y="19.37" width="7.55" height="2.23" fill="#080808" opacity="0.7"/>
<rect x="0.00" y="22.35" width="7.55" height="7.45" fill="#080808"/>
<rect x="0.76" y="24.59" width="6.04" height="3.73" fill="#f4f4f4" opacity="0.6"/>
<rect x="7.55" y="22.35" width="7.55" height="7.45" fill="#080808"/>
<rect x="8.30" y="24.59" width="6.04" height="3.73" fill="#f4f4f4" opacity="0.5"/>
<rect x="15.10" y="22.35" width="7.55" height="7.45" fill="#f4f4f4"/>
<rect x="17.36" y="22.35" width="3.02" height="7.45" fill="#080808" opacity="0.7"/>
<rect x="22.65" y="22.35" width="7.55" height="7.45" fill="#f4f4f4"/>
<rect x="24.16" y="26.82" width="4.53" height="1.49" fill="#080808" opacity="0.5"/>
<rect x="30.20" y="22.35" width="7.55" height="7.45" fill="#f4f4f4"/>
<polygon points="31.71,28.31 33.98,25.33 36.24,28.31" fill="#080808"/>
<rect x="37.75" y="22.35" width="7.55" height="7.45" fill="#f4f4f4"/>
<rect x="45.30" y="22.35" width="7.55" height="7.45" fill="#0c0c90"/>
<rect x="46.05" y="23.84" width="6.04" height="1.04" fill="#20e0f0" opacity="1"/>
<rect x="46.05" y="26.82" width="6.04" height="1.04" fill="#20e0f0" opacity="1"/>
<rect x="48.47" y="23.10" width="1.21" height="5.96" fill="#20e0f0" opacity="1"/>
<rect x="52.85" y="22.35" width="7.55" height="7.45" fill="#0c0c90"/>
<rect x="53.61" y="23.84" width="6.04" height="1.04" fill="#20e0f0" opacity="1"/>
<rect x="53.61" y="26.82" width="6.04" height="1.04" fill="#20e0f0" opacity="1"/>
<rect x="56.02" y="23.10" width="1.21" height="5.96" fill="#20e0f0" opacity="1"/>
<rect x="60.40" y="22.35" width="7.55" height="7.45" fill="#0c0c90"/>
<rect x="61.91" y="24.59" width="6.04" height="2.98" fill="#e020e0" opacity="0.7"/>
<rect x="67.95" y="22.35" width="7.55" height="7.45" fill="#0c0c90"/>
<rect x="67.95" y="25.33" width="6.04" height="2.23" fill="#e020e0" opacity="0.7"/>
<rect x="75.50" y="22.35" width="7.55" height="7.45" fill="#844040"/>
<rect x="76.25" y="23.10" width="6.04" height="5.96" fill="#080808" opacity="0.5"/>
<rect x="83.05" y="22.35" width="7.55" height="7.45" fill="#9a5010"/>
<rect x="83.80" y="23.10" width="6.04" height="5.96" fill="#080808" opacity="0.5"/>
<rect x="90.60" y="22.35" width="7.55" height="7.45" fill="#844040"/>
<rect x="92.11" y="24.59" width="6.04" height="2.98" fill="#e020e0" opacity="1"/>
<rect x="98.15" y="22.35" width="7.55" height="7.45" fill="#844040"/>
<rect x="98.15" y="24.96" width="6.04" height="2.61" fill="#e020e0" opacity="1"/>
<rect x="105.70" y="22.35" width="7.55" height="7.45" fill="#f4f4f4"/>
<rect x="107.97" y="22.35" width="3.02" height="7.45" fill="#080808" opacity="0.8"/>
<rect x="0.00" y="29.80" width="7.55" height="7.45" fill="#080808"/>
<rect x="3.02" y="32.04" width="1.51" height="1.49" fill="#f4f4f4" opacity="1"/>
<rect x="7.55" y="29.80" width="7.55" height="7.45" fill="#080808"/>
<rect x="10.57" y="34.27" width="1.51" height="1.49" fill="#f4f4f4" opacity="1"/>
<rect x="15.10" y="29.80" width="7.55" height="7.45" fill="#080808"/>
<rect x="16.61" y="32.04" width="4.53" height="2.98" fill="#f4f4f4" opacity="0.8"/>
<rect x="22.65" y="29.80" width="7.55" height="7.45" fill="#80e0e0"/>
<rect x="30.20" y="29.80" width="7.55" height="7.45" fill="#f4f4f4"/>
<rect x="32.46" y="33.52" width="3.77" height="2.98" fill="#080808" opacity="0.7"/>
<rect x="37.75" y="29.80" width="7.55" height="7.45" fill="#080808"/>
<rect x="39.64" y="31.29" width="3.77" height="4.47" fill="#f4f4f4" opacity="1"/>
<rect x="40.77" y="32.41" width="1.51" height="2.23" fill="#080808" opacity="1"/>
<rect x="45.30" y="29.80" width="7.55" height="7.45" fill="#0c0c90"/>
<rect x="52.85" y="29.80" width="7.55" height="7.45" fill="#0c0c90"/>
<rect x="53.61" y="31.29" width="6.04" height="1.04" fill="#20e0f0" opacity="1"/>
<rect x="53.61" y="34.27" width="6.04" height="1.04" fill="#20e0f0" opacity="1"/>
<rect x="56.02" y="30.55" width="1.21" height="5.96" fill="#20e0f0" opacity="1"/>
<rect x="60.40" y="29.80" width="7.55" height="7.45" fill="#0c0c90"/>
<rect x="61.91" y="32.04" width="4.53" height="2.98" fill="#e020e0" opacity="1"/>
<rect x="67.95" y="29.80" width="7.55" height="7.45" fill="#f8b080"/>
<polygon points="67.95,29.80 75.50,29.80 75.50,37.25" fill="#9a5010"/>
<polygon points="67.95,29.80 69.08,29.80 75.50,36.51 75.50,37.25" fill="#080808"/>
<rect x="75.50" y="29.80" width="7.55" height="7.45" fill="#904848"/>
<rect x="83.05" y="29.80" width="7.55" height="7.45" fill="#9a5010"/>
<polygon points="83.05,37.25 89.47,29.80 90.60,29.80 84.18,37.25" fill="#080808"/>
<rect x="90.60" y="29.80" width="7.55" height="7.45" fill="#9a5010"/>
<polygon points="90.60,37.25 97.02,29.80 98.15,29.80 91.73,37.25" fill="#080808"/>
<rect x="98.15" y="29.80" width="7.55" height="7.45" fill="#f4f4f4"/>
<rect x="99.66" y="31.29" width="4.53" height="4.47" fill="#080808" opacity="0.5"/>
<rect x="105.70" y="29.80" width="7.55" height="7.45" fill="#f4f4f4"/>
<rect x="107.97" y="29.80" width="3.02" height="7.45" fill="#080808" opacity="0.8"/>
<rect x="0.00" y="37.25" width="7.55" height="7.45" fill="#080808"/>
<rect x="3.02" y="40.98" width="1.51" height="1.49" fill="#555" opacity="1"/>
<rect x="7.55" y="37.25" width="7.55" height="7.45" fill="#080808"/>
<rect x="10.57" y="40.98" width="1.51" height="1.49" fill="#f4f4f4" opacity="1"/>
<rect x="15.10" y="37.25" width="7.55" height="7.45" fill="#f4f4f4"/>
<rect x="16.61" y="40.23" width="4.53" height="4.47" fill="#080808" opacity="0.6"/>
<rect x="22.65" y="37.25" width="7.55" height="7.45" fill="#f8b080"/>
<polygon points="22.65,44.70 30.20,37.25 30.20,44.70" fill="#9a5010"/>
<rect x="30.20" y="37.25" width="7.55" height="7.45" fill="#9a5010"/>
<rect x="30.95" y="38.74" width="6.04" height="4.47" fill="#080808" opacity="0.5"/>
<rect x="37.75" y="37.25" width="7.55" height="7.45" fill="#f8b080"/>
<polygon points="37.75,37.25 45.30,44.70 37.75,44.70" fill="#9a5010"/>
<rect x="45.30" y="37.25" width="7.55" height="7.45" fill="#0c0c90"/>
<rect x="46.05" y="38.74" width="6.04" height="1.04" fill="#20e0f0" opacity="1"/>
<rect x="46.05" y="41.72" width="6.04" height="1.04" fill="#20e0f0" opacity="1"/>
<rect x="48.47" y="37.99" width="1.21" height="5.96" fill="#20e0f0" opacity="1"/>
<rect x="52.85" y="37.25" width="7.55" height="7.45" fill="#0c0c90"/>
<rect x="53.61" y="38.74" width="6.04" height="1.04" fill="#20e0f0" opacity="1"/>
<rect x="53.61" y="41.72" width="6.04" height="1.04" fill="#20e0f0" opacity="1"/>
<rect x="56.02" y="37.99" width="1.21" height="5.96" fill="#20e0f0" opacity="1"/>
<rect x="60.40" y="37.25" width="7.55" height="7.45" fill="#c8c8c8"/>
<rect x="61.16" y="38.74" width="6.04" height="4.47" fill="#080808" opacity="0.5"/>
<rect x="67.95" y="37.25" width="7.55" height="7.45" fill="#c8c8c8"/>
<rect x="69.46" y="37.25" width="4.53" height="7.45" fill="#080808" opacity="0.6"/>
<rect x="75.50" y="37.25" width="7.55" height="7.45" fill="#c8c8c8"/>
<rect x="77.01" y="37.25" width="4.53" height="7.45" fill="#080808" opacity="0.6"/>
<rect x="83.05" y="37.25" width="7.55" height="7.45" fill="#9a5010"/>
<rect x="84.56" y="37.25" width="4.53" height="7.45" fill="#080808" opacity="0.55"/>
<rect x="90.60" y="37.25" width="7.55" height="7.45" fill="#c8c8c8"/>
<polygon points="90.60,37.25 98.15,37.25 94.38,44.70" fill="#9a5010"/>
<rect x="98.15" y="37.25" width="7.55" height="7.45" fill="#f8b080"/>
<polygon points="98.15,37.25 105.70,37.25 101.92,44.70" fill="#9a5010"/>
<rect x="105.70" y="37.25" width="7.55" height="7.45" fill="#f4f4f4"/>
<rect x="107.97" y="37.25" width="3.02" height="7.45" fill="#080808" opacity="0.8"/>
<path d="M7.55 0V44.7 M15.10 0V44.7 M22.65 0V44.7 M30.20 0V44.7 M37.75 0V44.7 M45.30 0V44.7 M52.85 0V44.7 M60.40 0V44.7 M67.95 0V44.7 M75.50 0V44.7 M83.05 0V44.7 M90.60 0V44.7 M98.15 0V44.7 M105.70 0V44.7 M0 7.45H113.25 M0 14.90H113.25 M0 22.35H113.25 M0 29.80H113.25 M0 37.25H113.25" stroke="#ffffff" stroke-width="0.5" opacity="0.35"/>
</svg>
<!-- tileset tools -->
<svg class="a" style="left:436px;top:346px" width="102" height="18">
<rect x="2.5" y="2.5" width="11" height="11" rx="2" fill="#d6d6d6" stroke="#3c3c3c" stroke-width="1.5"/><path d="M8 5V11M5 8H11" stroke="#222" stroke-width="1.5"/>
<rect x="23" y="2" width="11" height="13" fill="#f2f2f2" stroke="#9a9a9a" stroke-width="0.8"/><rect x="22.5" y="2" width="2.2" height="13" fill="#3a8ad0"/><rect x="26.5" y="5" width="4" height="3" fill="#777"/><path d="M26 10H32M26 12H32" stroke="#999" stroke-width="0.8"/>
<rect x="44" y="2" width="11" height="13" fill="#e4e4e4" stroke="#b6b6b6" stroke-width="0.8"/><rect x="47" y="5" width="4" height="3" fill="#b0b0b0"/><path d="M47 10H53M47 12H53" stroke="#bbb" stroke-width="0.8"/>
<rect x="66.5" y="2.5" width="9" height="12" rx="1.5" fill="#d0d0d0" stroke="#444" stroke-width="1.3"/><circle cx="71" cy="8.5" r="2" fill="none" stroke="#333" stroke-width="1.1"/>
<path d="M85 5Q85 2 88 2H96Q99 2 99 5V13Q99 15.5 96.5 15.5H87.5Q85 15.5 85 13Z" fill="#4a4a4a"/><path d="M88 5Q90.5 1.5 93.5 4Q96 3 96.5 5.5Z" fill="#d8d8d8"/><g fill="#cfcfcf"><rect x="87" y="8" width="1.3" height="1.3"/><rect x="90" y="8" width="1.3" height="1.3"/><rect x="93" y="8" width="1.3" height="1.3"/><rect x="96" y="8" width="1.3" height="1.3"/><rect x="87" y="11" width="1.3" height="1.3"/><rect x="90" y="11" width="1.3" height="1.3"/><rect x="93" y="11" width="1.3" height="1.3"/><rect x="96" y="11" width="1.3" height="1.3"/></g>
</svg>
<div class="t" style="left:551px;top:347px;font-size:11px;font-weight:bold;color:#111;letter-spacing:-1px">»</div>
<div class="a" style="left:563px;top:344px;width:73px;height:21px;background:#d4d4d4;border:1px solid #a2a2a2;border-radius:3px"></div>
<div class="a" style="left:564px;top:345px;width:55px;height:19px;background:#f6f6f6;border-radius:2px 0 0 2px;border-right:1px solid #b0b0b0"></div>
<div class="t" style="left:567px;top:348px;color:#222">100 %</div>
<svg class="a" style="left:623px;top:352px" width="8" height="5"><path d="M0.5 0.5H7.5L4 4.5Z" fill="#555"/></svg>
<!-- bottom tabs -->
<div class="a" style="left:426px;top:373px;width:214px;height:23px;background:#a8a8a8;border:1px solid #9e9e9e;border-right:none"></div>
<div class="a" style="left:494px;top:373px;width:63px;height:23px;background:#d3d3d3;border:1px solid #bcbcbc;border-bottom:none"></div>
<div class="t" style="left:437px;top:378px;color:#2c2c2c;letter-spacing:0.4px">Terrains</div>
<div class="t" style="left:504px;top:378px;color:#2c2c2c;letter-spacing:0.36px">Tilesets</div>
<div class="a" style="left:421px;top:396px;width:219px;height:26px;background:#c8c8c8"></div>
<!-- combos -->
<div class="a" style="left:425px;top:399px;width:117px;height:21px;background:linear-gradient(#dadada,#cdcdcd);border:1px solid #a4a4a4;border-radius:3px"></div>
<svg class="a" style="left:430px;top:404px" width="12" height="11"><g fill="#3a7ad0"><rect x="0" y="0" width="12" height="11"/></g><g fill="#e8f0ff"><rect x="1" y="1" width="2.5" height="2.5"/><rect x="4.7" y="1" width="2.5" height="2.5"/><rect x="8.4" y="1" width="2.6" height="2.5"/><rect x="1" y="4.3" width="2.5" height="2.5"/><rect x="4.7" y="4.3" width="2.5" height="2.5"/><rect x="8.4" y="4.3" width="2.6" height="2.5"/><rect x="1" y="7.6" width="2.5" height="2.4"/><rect x="4.7" y="7.6" width="2.5" height="2.4"/><rect x="8.4" y="7.6" width="2.6" height="2.4"/></g></svg>
<div class="t" style="left:446px;top:403px;color:#222">Tile Layer 1</div>
<svg class="a" style="left:529px;top:407px" width="8" height="5"><path d="M0.5 0.5H7.5L4 4.5Z" fill="#555"/></svg>
<div class="a" style="left:547px;top:399px;width:73px;height:21px;background:#d4d4d4;border:1px solid #a2a2a2;border-radius:3px"></div>
<div class="a" style="left:548px;top:400px;width:54px;height:19px;background:#f6f6f6;border-radius:2px 0 0 2px;border-right:1px solid #b0b0b0"></div>
<div class="t" style="left:551px;top:403px;color:#222">200 %</div>
<svg class="a" style="left:607px;top:407px" width="8" height="5"><path d="M0.5 0.5H7.5L4 4.5Z" fill="#555"/></svg>
<svg class="a" style="left:626px;top:408px" width="13" height="13"><g fill="#e6e6e6"><rect x="10" y="2" width="1" height="1"/><rect x="7" y="5" width="1" height="1"/><rect x="10" y="5" width="1" height="1"/><rect x="4" y="8" width="1" height="1"/><rect x="7" y="8" width="1" height="1"/><rect x="10" y="8" width="1" height="1"/><rect x="1" y="11" width="1" height="1"/><rect x="4" y="11" width="1" height="1"/><rect x="7" y="11" width="1" height="1"/><rect x="10" y="11" width="1" height="1"/></g></svg>
</body></html>
